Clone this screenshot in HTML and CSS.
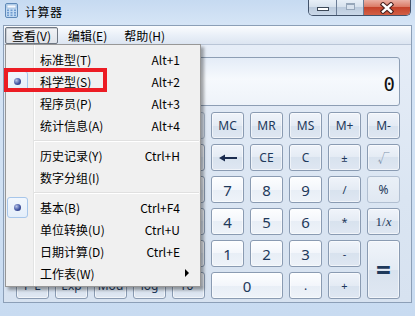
FILE: index.html
```html
<!DOCTYPE html>
<html>
<head>
<meta charset="utf-8">
<link rel="stylesheet" href="styles.css">
</head>
<body>
<div class="win">
  <div class="titlebar">
    <svg class="appicon" width="13" height="15" viewBox="0 0 13 15">
      <rect x="0.5" y="0.5" width="12" height="14" rx="1.5" fill="#c3dbf3" stroke="#5f89b8"/>
      <rect x="2" y="2" width="9" height="3" fill="#f6faff" stroke="#86a9cf" stroke-width="0.6"/>
      <g fill="#6f9bd0">
        <rect x="2" y="6.5" width="2" height="1.6"/><rect x="5.5" y="6.5" width="2" height="1.6"/><rect x="9" y="6.5" width="2" height="1.6"/>
        <rect x="2" y="9" width="2" height="1.6"/><rect x="5.5" y="9" width="2" height="1.6"/><rect x="9" y="9" width="2" height="1.6"/>
        <rect x="2" y="11.5" width="2" height="1.6"/><rect x="5.5" y="11.5" width="2" height="1.6"/><rect x="9" y="11.5" width="2" height="1.6"/>
      </g>
    </svg>
    <span class="title">计算器</span>
    <div class="caps">
      <div class="cap min"><span class="minbar"></span></div>
      <div class="cap max"><span class="maxbox"></span></div>
      <div class="cap close">
        <svg width="14" height="12" viewBox="0 0 14 12">
          <path d="M3 2.5 L11 9.5 M11 2.5 L3 9.5" stroke="#4a2320" stroke-width="4.6" stroke-linecap="square"/>
          <path d="M3 2.5 L11 9.5 M11 2.5 L3 9.5" stroke="#ffffff" stroke-width="2.4" stroke-linecap="square"/>
        </svg>
      </div>
    </div>
  </div>

  <div class="client">
    <div class="menubar">
      <span class="mb active">查看(V)</span>
      <span class="mb">编辑(E)</span>
      <span class="mb">帮助(H)</span>
    </div>
    <div class="calc">
      <div class="display"><span class="val">0</span></div>
      <div class="keys">
        <div class="group"></div>
        <div class="k">MC</div><div class="k">MR</div><div class="k">MS</div><div class="k">M+</div><div class="k">M-</div>

        <div class="blank"></div><div class="k"></div><div class="k"></div><div class="k"></div><div class="k"></div>
        <div class="k"><svg width="18" height="8" viewBox="0 0 18 8"><path d="M0 4 L6 0.5 V3 H18 V5 H6 V7.5Z" fill="#1b2c4f"/></svg></div>
        <div class="k">CE</div><div class="k">C</div><div class="k small">±</div><div class="k dim">√</div>

        <div class="k"></div><div class="k"></div><div class="k"></div><div class="k"></div><div class="k"></div>
        <div class="k num">7</div><div class="k num">8</div><div class="k num">9</div><div class="k small">/</div><div class="k flat">%</div>

        <div class="k"></div><div class="k"></div><div class="k"></div><div class="k"></div><div class="k"></div>
        <div class="k num">4</div><div class="k num">5</div><div class="k num">6</div><div class="k small">*</div><div class="k inv">1/<i>x</i></div>

        <div class="k"></div><div class="k"></div><div class="k"></div><div class="k"></div><div class="k"></div>
        <div class="k num">1</div><div class="k num">2</div><div class="k num">3</div><div class="k small">-</div><div class="k eq">=</div>

        <div class="k">F-E</div><div class="k">Exp</div><div class="k">Mod</div><div class="k">log</div><div class="k">10ˣ</div>
        <div class="k num zero">0</div><div class="k num point">.</div><div class="k small">+</div>
      </div>
    </div>
  </div>

  <div class="menu">
    <div class="mi"><span class="chk"></span><span class="lbl">标准型(T)</span><span class="acc">Alt+1</span></div>
    <div class="mi"><span class="chk"><span class="box"><span class="bullet"></span></span></span><span class="lbl">科学型(S)</span><span class="acc">Alt+2</span></div>
    <div class="mi"><span class="chk"></span><span class="lbl">程序员(P)</span><span class="acc">Alt+3</span></div>
    <div class="mi"><span class="chk"></span><span class="lbl">统计信息(A)</span><span class="acc">Alt+4</span></div>
    <div class="sep"></div>
    <div class="mi"><span class="chk"></span><span class="lbl">历史记录(Y)</span><span class="acc">Ctrl+H</span></div>
    <div class="mi"><span class="chk"></span><span class="lbl">数字分组(I)</span></div>
    <div class="sep"></div>
    <div class="mi"><span class="chk"><span class="box"><span class="bullet"></span></span></span><span class="lbl">基本(B)</span><span class="acc">Ctrl+F4</span></div>
    <div class="mi"><span class="chk"></span><span class="lbl">单位转换(U)</span><span class="acc">Ctrl+U</span></div>
    <div class="mi"><span class="chk"></span><span class="lbl">日期计算(D)</span><span class="acc">Ctrl+E</span></div>
    <div class="mi"><span class="chk"></span><span class="lbl">工作表(W)</span><span class="arrow"></span></div>
  </div>

  <div class="redmark"></div>
</div>
</body>
</html>
```

FILE: styles.css
```css
html, body {
  margin: 0;
  padding: 0;
}
body {
  width: 415px;
  height: 316px;
  overflow: hidden;
  background: #c9dcf1;
  font-family: "Noto Sans CJK SC", sans-serif;
  font-size: 12px;
  color: #000;
}
.win {
  position: relative;
  width: 415px;
  height: 316px;
  background: linear-gradient(#c6daf1, #d6e5f6 25px, #cfe0f3 200px, #c8dbf1);
}

/* title bar */
.titlebar {
  height: 25px;
  display: flex;
  align-items: flex-start;
}
.appicon {
  margin: 3px 0 0 5px;
  flex: none;
}
.title {
  margin-left: 7px;
  line-height: 24px;
  font-size: 12px;
  letter-spacing: 0.5px;
  color: #000;
}
.caps {
  margin-left: auto;
  margin-right: 4px;
  display: flex;
  height: 15px;
  border: 1px solid #42536b;
  border-top: none;
  border-radius: 0 0 5px 5px;
  overflow: hidden;
}
.cap {
  height: 15px;
  display: flex;
  justify-content: center;
}
.cap + .cap {
  border-left: 1px solid #6b7d96;
}
.min, .max {
  background: linear-gradient(#e8eff7, #d5e0ec 50%, #bccbdd 50%, #cad8e8);
}
.min { width: 27px; }
.max { width: 26px; }
.close {
  width: 46px;
  align-items: center;
  background: linear-gradient(#eab0a4, #db7b66 45%, #c5432b 50%, #d25f45);
}
.minbar {
  margin-top: 7px;
  width: 10px;
  height: 2px;
  background: #fff;
  border: 1px solid #3c4858;
}
.maxbox {
  margin-top: 3px;
  width: 7px;
  height: 4px;
  border: 1px solid #97a7ba;
  border-top-width: 2px;
  background: #d8e2ee;
}

/* client */
.client {
  margin: 0 3px;
  border: 1px solid #8c9fb7;
}
.menubar {
  height: 18px;
  display: flex;
  padding-left: 1px;
  background: linear-gradient(#fbfcfe, #eaf0f8 50%, #dce5f1);
  border-bottom: 1px solid #b9c5d6;
}
.mb {
  margin-top: 1px;
  margin-right: 3px;
  height: 15px;
  padding: 0 6px;
  line-height: 15px;
  font-size: 12px;
  border: 1px solid transparent;
  border-radius: 2px;
}
.mb.active {
  border-color: #6f7782;
  background: linear-gradient(#f1f3f6, #dfe3e9);
  box-shadow: inset 1px 1px 0 #c9cdd3;
}
.calc {
  height: 257px;
  box-sizing: border-box;
  padding: 12px 11px 3px 12px;
  background: linear-gradient(#e6edf7, #dae5f2 60%, #d7e2f0);
}
.display {
  height: 49px;
  box-sizing: border-box;
  border: 1px solid #8d9eb4;
  border-radius: 3px;
  background: linear-gradient(#e4ecf7, #f6f9fd 45%, #eef3f9);
  display: flex;
  justify-content: flex-end;
  align-items: flex-end;
  padding: 0 4px 11px 0;
}
.val {
  font-family: "DejaVu Sans Mono", monospace;
  font-size: 19px;
  line-height: 19px;
  color: #111;
}
.keys {
  margin-top: 6px;
  display: grid;
  grid-template-columns: repeat(10, 33px);
  grid-template-rows: repeat(6, 27px);
  column-gap: 6px;
  row-gap: 5px;
}
.group {
  grid-column: 1 / 6;
  border: 1px solid #a9b8cb;
  border-radius: 3px;
}
.k {
  box-sizing: border-box;
  border: 1px solid #8a9bb2;
  border-radius: 3px;
  background: linear-gradient(#f0f4fa, #e4ebf4 50%, #d8e2ee 50%, #dfe7f2);
  box-shadow: inset 0 0 0 1px rgba(255,255,255,0.55);
  color: #1e395b;
  font-family: "Noto Sans", "Noto Sans CJK SC", sans-serif;
  font-size: 12px;
  display: flex;
  align-items: center;
  justify-content: center;
}
.k.num {
  background: linear-gradient(#fdfeff, #f3f6fb 50%, #e8eef6 50%, #eef3f9);
  font-size: 15px;
}
.k.small {
  font-size: 11px;
}
.k.dim {
  color: #7f93ad;
}
.k.flat {
  border-color: #b1bfd1;
  background: linear-gradient(#eaf0f7, #e0e8f2);
  box-shadow: none;
}
.k.inv {
  font-family: "Liberation Serif", serif;
  font-size: 13px;
}
.k.inv i {
  font-style: italic;
}
.k.eq {
  grid-row: span 2;
  font-size: 26px;
  font-weight: bold;
}
.k.zero {
  grid-column: span 2;
}
.k.point {
  font-size: 12px;
}

/* dropdown menu */
.menu {
  position: absolute;
  left: 5px;
  top: 44px;
  width: 196px;
  box-sizing: border-box;
  border: 1px solid #979797;
  padding: 3px 0 2px;
  background:
    linear-gradient(to right, transparent 27px, #e2e3e3 27px, #e2e3e3 28px, #ffffff 28px, #ffffff 29px, transparent 29px),
    #f0f0f0;
  box-shadow: 3px 3px 3px rgba(0,0,0,0.35);
  font-size: 12px;
}
.mi {
  height: 22px;
  display: flex;
  align-items: center;
  padding-right: 20px;
}
.chk {
  width: 27px;
  height: 22px;
  flex: none;
  display: flex;
  align-items: center;
  padding-left: 1px;
  box-sizing: border-box;
}
.box {
  width: 21px;
  height: 21px;
  box-sizing: border-box;
  border: 1px solid #a7c6ea;
  border-radius: 3px;
  background: linear-gradient(#f2f7fd, #e4eefa);
  display: flex;
  align-items: center;
  justify-content: center;
}
.bullet {
  width: 7px;
  height: 7px;
  border-radius: 50%;
  background: radial-gradient(circle at 35% 35%, #b7c4ea, #4256a3 55%, #1c2a6a);
}
.lbl {
  margin-left: 7px;
  flex: 1;
}
.acc {
  text-align: right;
}
.arrow {
  margin-right: -9px;
  width: 0;
  height: 0;
  border-left: 4px solid #000;
  border-top: 4px solid transparent;
  border-bottom: 4px solid transparent;
}
.sep {
  height: 8px;
  margin-left: 28px;
  margin-right: 1px;
  background: linear-gradient(transparent 4px, #e0e0e0 4px, #e0e0e0 5px, #ffffff 5px, #ffffff 6px, transparent 6px);
}

.redmark {
  position: absolute;
  left: 4px;
  top: 68px;
  width: 103px;
  height: 24px;
  box-sizing: border-box;
  border: 4px solid #ec1c24;
}
```
